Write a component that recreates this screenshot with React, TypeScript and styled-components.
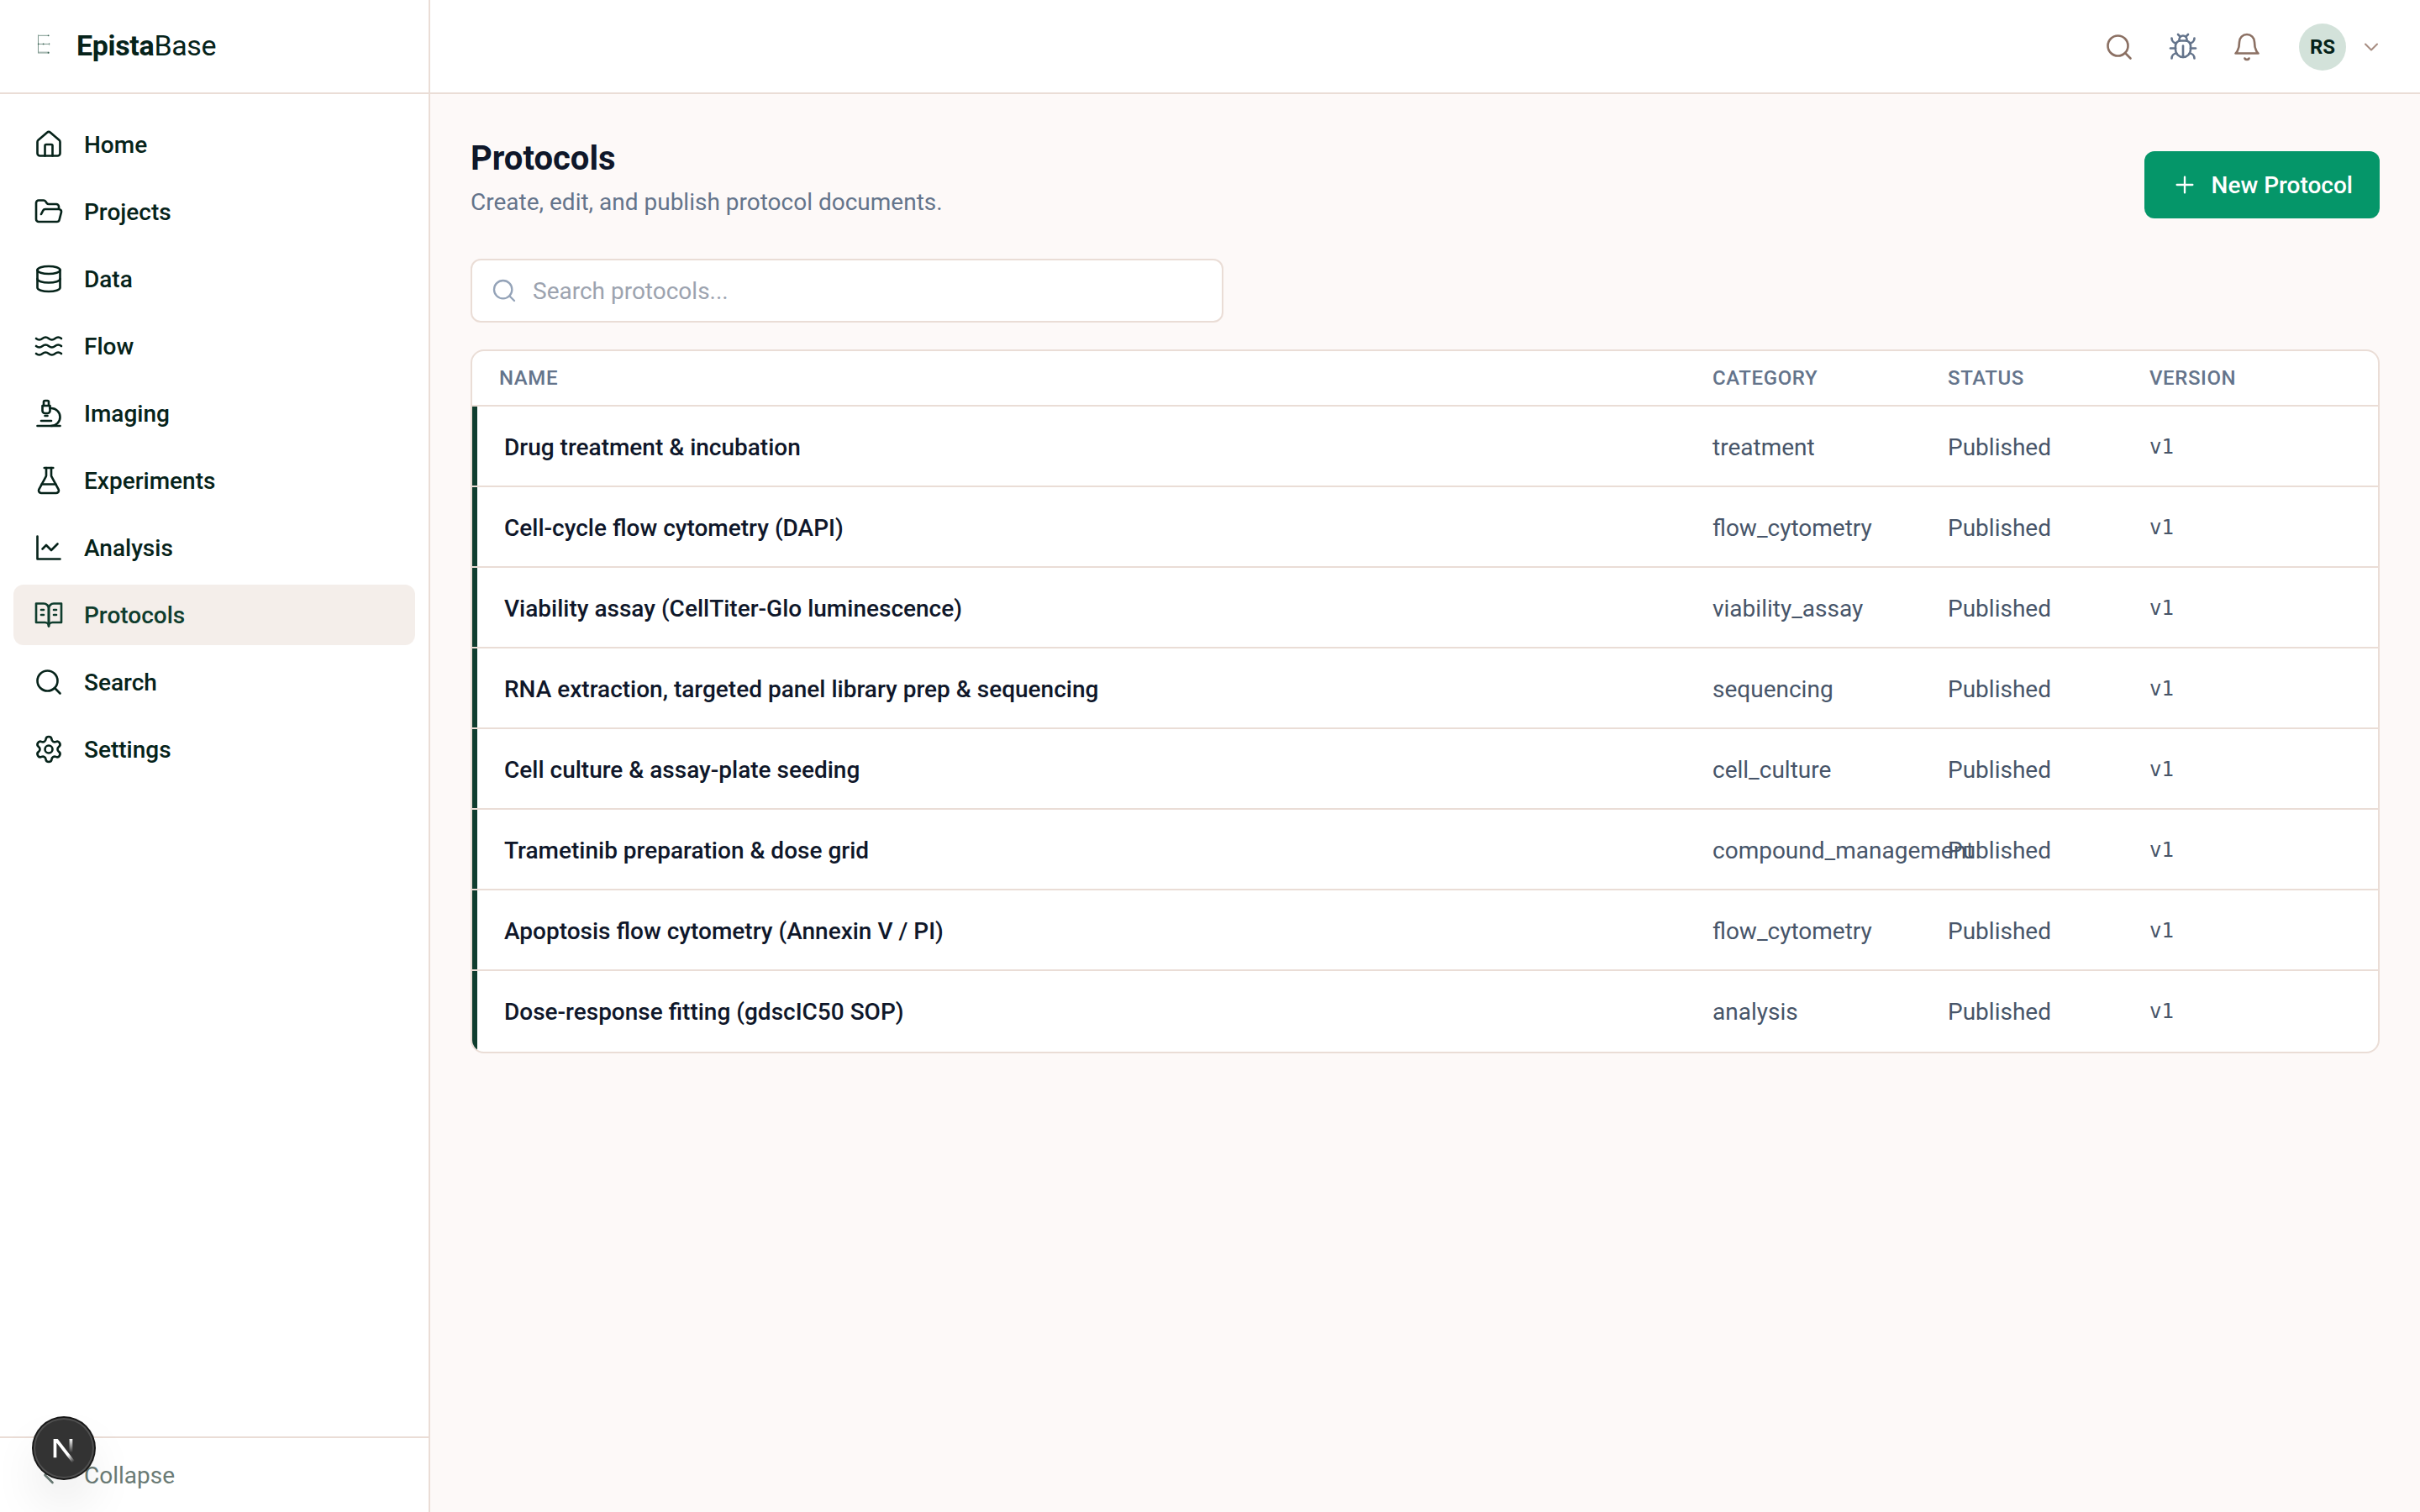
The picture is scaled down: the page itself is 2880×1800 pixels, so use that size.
import React from "react";
import styled, { createGlobalStyle } from "styled-components";

const color = {
  page: "#fdf9f8",
  surface: "#ffffff",
  line: "#eaddd6",
  ink: "#06231a",
  brand: "#0f3d2e",
  slate9: "#0f172a",
  slate6: "#475569",
  slate5: "#64748b",
};

const GlobalStyle = createGlobalStyle`
  *, *::before, *::after { box-sizing: border-box; }
  html, body { margin: 0; padding: 0; }
  body {
    font-family: Roboto, "Liberation Sans", sans-serif;
    font-size: 28px;
    line-height: 40px;
    color: ${color.ink};
    background: ${color.page};
  }
  button, input { font: inherit; }
`;

const Shell = styled.div`
  display: flex;
  width: 100%;
  height: 100vh;
  min-height: 1800px;
  overflow: hidden;
`;

const Sidebar = styled.aside`
  display: flex;
  flex-direction: column;
  flex: none;
  width: 512px;
  background: ${color.surface};
  border-right: 2px solid ${color.line};
`;

const Brand = styled.div`
  display: flex;
  align-items: center;
  gap: 24px;
  height: 112px;
  padding: 0 0 2px 36px;
  border-bottom: 2px solid ${color.line};
`;

const BrandName = styled.div`
  font-size: 34px;
  font-weight: 400;
  letter-spacing: -0.34px;
  strong { font-weight: 700; }
`;

const Nav = styled.nav`
  display: flex;
  flex-direction: column;
  gap: 8px;
  flex: 1;
  padding: 24px 16px;
`;

const NavItem = styled.a<{ $active?: boolean }>`
  display: flex;
  align-items: center;
  gap: 24px;
  height: 72px;
  padding: 0 24px;
  border-radius: 12px;
  font-weight: 500;
  color: ${(p) => (p.$active ? color.brand : color.ink)};
  background: ${(p) => (p.$active ? "#f4eeea" : "transparent")};
`;

const Label = styled.span`
  padding-top: 2px;
`;

const SidebarFooter = styled.div`
  padding: 8px 16px;
  border-top: 2px solid ${color.line};
`;

const CollapseButton = styled(NavItem)`
  font-weight: 400;
  color: #6a7b75;
`;

const Content = styled.div`
  display: flex;
  flex-direction: column;
  flex: 1;
  min-width: 0;
`;

const TopBar = styled.header`
  display: flex;
  align-items: center;
  justify-content: flex-end;
  gap: 8px;
  height: 112px;
  padding-right: 32px;
  background: ${color.surface};
  box-shadow: inset 0 -2px 0 ${color.line};
`;

const IconButton = styled.div<{ $color: string }>`
  display: flex;
  padding: 16px;
  color: ${(p) => p.$color};
`;

const Account = styled.div`
  display: flex;
  align-items: center;
  gap: 16px;
  padding: 0 12px 0 20px;
  color: #a78d82;
`;

const Avatar = styled.div`
  display: grid;
  place-items: center;
  width: 56px;
  height: 56px;
  border-radius: 50%;
  background: #d3e2da;
  color: ${color.ink};
  font-size: 24px;
  font-weight: 700;
  line-height: 32px;
`;

const Page = styled.main`
  display: flex;
  flex-direction: column;
  padding: 48px;
`;

const PageHead = styled.div`
  display: flex;
  align-items: flex-end;
  justify-content: space-between;
  height: 100px;
  margin-bottom: 48px;
`;

const Title = styled.h1`
  margin: 0 0 3px;
  font-size: 40px;
  line-height: 58px;
  font-weight: 700;
  color: ${color.slate9};
`;

const Subtitle = styled.p`
  margin: 0 0 -1px;
  color: ${color.slate5};
`;

const PrimaryButton = styled.button`
  display: flex;
  align-items: center;
  gap: 16px;
  height: 80px;
  padding: 0 32px;
  border: 0;
  border-radius: 12px;
  background: #059669;
  color: #fff;
  font-weight: 500;
`;

const SearchField = styled.label`
  display: flex;
  align-items: center;
  gap: 18px;
  width: 896px;
  height: 76px;
  padding: 0 22px;
  margin-bottom: 32px;
  border: 2px solid ${color.line};
  border-radius: 12px;
  background: ${color.surface};
  color: #94a3b8;
`;

const SearchInput = styled.input`
  flex: 1;
  min-width: 0;
  padding: 2px 0 0;
  border: 0;
  outline: 0;
  background: transparent;
  color: ${color.slate9};
  &::placeholder { color: #9ca3af; opacity: 1; }
`;

const Table = styled.div`
  border: 2px solid ${color.line};
  border-radius: 16px;
  overflow: hidden;
  background: ${color.surface};
`;

const Row = styled.div`
  display: grid;
  grid-template-columns: minmax(0, 1fr) 280px 240px 240px;
  align-items: center;
  height: 96px;
  padding: 4px 32px 0;
  border-bottom: 2px solid ${color.line};
  box-shadow: inset 6px 0 0 ${color.brand};
  color: ${color.slate6};
  white-space: nowrap;
  &:last-child { padding-bottom: 2px; border-bottom: 0; }
`;

const HeadRow = styled(Row)`
  height: 66px;
  padding-top: 0;
  box-shadow: none;
  font-size: 24px;
  line-height: 32px;
  font-weight: 500;
  letter-spacing: 0.6px;
  text-transform: uppercase;
  color: ${color.slate5};
`;

const NameCell = styled.div`
  padding-left: 6px;
  font-weight: 500;
  color: ${color.slate9};
`;

const VersionCell = styled.div`
  padding-bottom: 2px;
  font-family: "DejaVu Sans Mono", "Liberation Mono", monospace;
  font-size: 24px;
  line-height: 32px;
`;

const DevBadge = styled.div`
  position: fixed;
  left: 40px;
  bottom: 40px;
  display: flex;
  align-items: center;
  justify-content: center;
  width: 72px;
  height: 72px;
  border-radius: 50%;
  background: #333;
  box-shadow: 0 0 0 2px #171717, inset 0 0 0 2px rgba(255, 255, 255, 0.14),
    0 32px 64px -16px rgba(0, 0, 0, 0.24);
`;

const Glyph = styled.svg`
  display: block;
  flex: none;
  fill: none;
  stroke: currentColor;
  stroke-linecap: round;
  stroke-linejoin: round;
`;

const DevGlyph = styled.svg`
  display: block;
  flex: none;
`;

const shapes: Record<string, React.ReactNode> = {
  home: (
    <>
      <path d="M15 21v-8a1 1 0 0 0-1-1h-4a1 1 0 0 0-1 1v8" />
      <path d="M3 10a2 2 0 0 1 .709-1.528l7-5.999a2 2 0 0 1 2.582 0l7 5.999A2 2 0 0 1 21 10v9a2 2 0 0 1-2 2H5a2 2 0 0 1-2-2z" />
    </>
  ),
  folder: (
    <path d="m6 14 1.5-2.9A2 2 0 0 1 9.24 10H20a2 2 0 0 1 1.94 2.5l-1.54 6a2 2 0 0 1-1.95 1.5H4a2 2 0 0 1-2-2V5a2 2 0 0 1 2-2h3.9a2 2 0 0 1 1.69.9l.81 1.2a2 2 0 0 0 1.67.9H18a2 2 0 0 1 2 2v2" />
  ),
  database: (
    <>
      <ellipse cx="12" cy="5" rx="9" ry="3" />
      <path d="M3 5V19A9 3 0 0 0 21 19V5" />
      <path d="M3 12A9 3 0 0 0 21 12" />
    </>
  ),
  waves: (
    <>
      <path d="M2 6c.6.5 1.2 1 2.5 1C7 7 7 5 9.5 5c2.6 0 2.4 2 5 2 2.5 0 2.5-2 5-2 1.3 0 1.9.5 2.5 1" />
      <path d="M2 12c.6.5 1.2 1 2.5 1 2.5 0 2.5-2 5-2 2.6 0 2.4 2 5 2 2.5 0 2.5-2 5-2 1.3 0 1.9.5 2.5 1" />
      <path d="M2 18c.6.5 1.2 1 2.5 1 2.5 0 2.5-2 5-2 2.6 0 2.4 2 5 2 2.5 0 2.5-2 5-2 1.3 0 1.9.5 2.5 1" />
    </>
  ),
  microscope: (
    <>
      <path d="M6 18h8" />
      <path d="M3 22h18" />
      <path d="M14 22a7 7 0 1 0 0-14h-1" />
      <path d="M9 14h2" />
      <path d="M9 12a2 2 0 0 1-2-2V6h6v4a2 2 0 0 1-2 2Z" />
      <path d="M12 6V3a1 1 0 0 0-1-1H9a1 1 0 0 0-1 1v3" />
    </>
  ),
  flask: (
    <>
      <path d="M14 2v6a2 2 0 0 0 .245.96l5.51 10.08A2 2 0 0 1 18 22H6a2 2 0 0 1-1.755-2.96l5.51-10.08A2 2 0 0 0 10 8V2" />
      <path d="M6.453 15h11.094" />
      <path d="M8.5 2h7" />
    </>
  ),
  chart: (
    <>
      <path d="M3 3v18h18" />
      <path d="m19 9-5 5-4-4-3 3" />
    </>
  ),
  book: (
    <>
      <path d="M2 3h6a4 4 0 0 1 4 4v14a3 3 0 0 0-3-3H2z" />
      <path d="M22 3h-6a4 4 0 0 0-4 4v14a3 3 0 0 1 3-3h7z" />
      <path d="M6 8h2M6 12h2M16 8h2M16 12h2" />
    </>
  ),
  search: (
    <>
      <circle cx="11" cy="11" r="8" />
      <path d="m21 21-4.3-4.3" />
    </>
  ),
  settings: (
    <>
      <path d="M9.671 4.136a2.34 2.34 0 0 1 4.659 0 2.34 2.34 0 0 0 3.319 1.915 2.34 2.34 0 0 1 2.33 4.033 2.34 2.34 0 0 0 0 3.831 2.34 2.34 0 0 1-2.33 4.033 2.34 2.34 0 0 0-3.319 1.915 2.34 2.34 0 0 1-4.659 0 2.34 2.34 0 0 0-3.32-1.915 2.34 2.34 0 0 1-2.33-4.033 2.34 2.34 0 0 0 0-3.831A2.34 2.34 0 0 1 6.35 6.051a2.34 2.34 0 0 0 3.319-1.915" />
      <circle cx="12" cy="12" r="3" />
    </>
  ),
  bug: (
    <>
      <path d="M12 20v-9" />
      <path d="M14 7a4 4 0 0 1 4 4v3a6 6 0 0 1-12 0v-3a4 4 0 0 1 4-4z" />
      <path d="M14.12 3.88 16 2" />
      <path d="M21 21a4 4 0 0 0-3.81-4" />
      <path d="M21 5a4 4 0 0 1-3.55 3.97" />
      <path d="M22 13h-4" />
      <path d="M3 21a4 4 0 0 1 3.81-4" />
      <path d="M3 5a4 4 0 0 0 3.55 3.97" />
      <path d="M6 13H2" />
      <path d="m8 2 1.88 1.88" />
      <path d="M9 7.13V6a3 3 0 1 1 6 0v1.13" />
    </>
  ),
  bell: (
    <>
      <path d="M6 8a6 6 0 0 1 12 0c0 7 3 9 3 9H3s3-2 3-9" />
      <path d="M10.3 21a1.94 1.94 0 0 0 3.4 0" />
    </>
  ),
  chevronDown: <path d="m6 9 6 6 6-6" />,
  chevronLeft: <path d="m15 18-6-6 6-6" />,
  plus: <path d="M5 12h14M12 5v14" />,
};

type IconProps = { name: string; size?: number; weight?: number };

const Icon = ({ name, size = 36, weight = 1.75 }: IconProps) => (
  <Glyph width={size} height={size} viewBox="0 0 24 24" strokeWidth={weight}>
    {shapes[name]}
  </Glyph>
);

const BrandMark = () => (
  <Glyph width={31} height={40} viewBox="0 0 31 40" strokeWidth={1}>
    <g stroke="#7f998f">
      <path d="M9.5 8v21" />
      <path d="M9.5 8.3h12.4M9.5 18.4h13.3M9.5 28.2h12.4" />
      <path d="M9.5 29.4h12.4" stroke="#b9c9c2" />
      <path d="M22.6 17.4v2" />
    </g>
    <g fill="#3a6354" stroke="none">
      <circle cx="21.6" cy="8.3" r=".9" />
      <circle cx="15.6" cy="18.4" r=".9" />
      <circle cx="9.6" cy="18.4" r=".8" />
      <circle cx="21.6" cy="28.8" r="1" />
    </g>
  </Glyph>
);

const DevMark = () => (
  <DevGlyph width="80" height="80" viewBox="0 0 40 40" fill="none">
    <g transform="translate(12.4 13)">
      <path d="M13.3 15.2 2.34 1v11.6" stroke="url(#diag)" strokeWidth="1.86" mask="url(#cut)" />
      <path d="M11.825 1.5v11.6" stroke="url(#stem)" strokeWidth="1.86" />
    </g>
    <defs>
      <linearGradient id="diag" x1="9.956" y1="11.123" x2="15.478" y2="17.967" gradientUnits="userSpaceOnUse">
        <stop stopColor="#fff" />
        <stop offset=".604" stopColor="#fff" stopOpacity="0" />
        <stop offset="1" stopColor="#fff" stopOpacity="0" />
      </linearGradient>
      <linearGradient id="stem" x1="11.822" y1="1.4" x2="11.791" y2="9.625" gradientUnits="userSpaceOnUse">
        <stop stopColor="#fff" />
        <stop offset="1" stopColor="#fff" stopOpacity="0" />
      </linearGradient>
      <mask id="cut" maskUnits="userSpaceOnUse" x="0" y="0" width="20" height="20">
        <rect width="20" height="20" fill="#fff" />
        <rect width="5" height="1.5" fill="#000" />
      </mask>
    </defs>
  </DevGlyph>
);

const navItems = [
  ["home", "Home"],
  ["folder", "Projects"],
  ["database", "Data"],
  ["waves", "Flow"],
  ["microscope", "Imaging"],
  ["flask", "Experiments"],
  ["chart", "Analysis"],
  ["book", "Protocols"],
  ["search", "Search"],
  ["settings", "Settings"],
];

const protocols = [
  ["Drug treatment & incubation", "treatment"],
  ["Cell-cycle flow cytometry (DAPI)", "flow_cytometry"],
  ["Viability assay (CellTiter-Glo luminescence)", "viability_assay"],
  ["RNA extraction, targeted panel library prep & sequencing", "sequencing"],
  ["Cell culture & assay-plate seeding", "cell_culture"],
  ["Trametinib preparation & dose grid", "compound_management"],
  ["Apoptosis flow cytometry (Annexin V / PI)", "flow_cytometry"],
  ["Dose-response fitting (gdscIC50 SOP)", "analysis"],
];

export default function App() {
  return (
    <>
      <GlobalStyle />
      <Shell>
        <Sidebar>
          <Brand>
            <BrandMark />
            <BrandName>
              <strong>Epista</strong>Base
            </BrandName>
          </Brand>
          <Nav>
            {navItems.map(([icon, label]) => (
              <NavItem key={label} $active={label === "Protocols"}>
                <Icon name={icon} />
                <Label>{label}</Label>
              </NavItem>
            ))}
          </Nav>
          <SidebarFooter>
            <CollapseButton>
              <Icon name="chevronLeft" />
              <Label>Collapse</Label>
            </CollapseButton>
          </SidebarFooter>
        </Sidebar>
        <Content>
          <TopBar>
            <IconButton $color="#8b7063">
              <Icon name="search" />
            </IconButton>
            <IconButton $color={color.slate5}>
              <Icon name="bug" />
            </IconButton>
            <IconButton $color="#8b7063">
              <Icon name="bell" />
            </IconButton>
            <Account>
              <Avatar>RS</Avatar>
              <Icon name="chevronDown" size={28} />
            </Account>
          </TopBar>
          <Page>
            <PageHead>
              <div>
                <Title>Protocols</Title>
                <Subtitle>Create, edit, and publish protocol documents.</Subtitle>
              </div>
              <PrimaryButton>
                <Icon name="plus" size={32} />
                <Label>New Protocol</Label>
              </PrimaryButton>
            </PageHead>
            <SearchField>
              <Icon name="search" size={32} />
              <SearchInput placeholder="Search protocols..." />
            </SearchField>
            <Table>
              <HeadRow>
                <div>Name</div>
                <div>Category</div>
                <div>Status</div>
                <div>Version</div>
              </HeadRow>
              {protocols.map(([name, category]) => (
                <Row key={name}>
                  <NameCell>{name}</NameCell>
                  <div>{category}</div>
                  <div>Published</div>
                  <VersionCell>v1</VersionCell>
                </Row>
              ))}
            </Table>
          </Page>
        </Content>
      </Shell>
      <DevBadge>
        <DevMark />
      </DevBadge>
    </>
  );
}
